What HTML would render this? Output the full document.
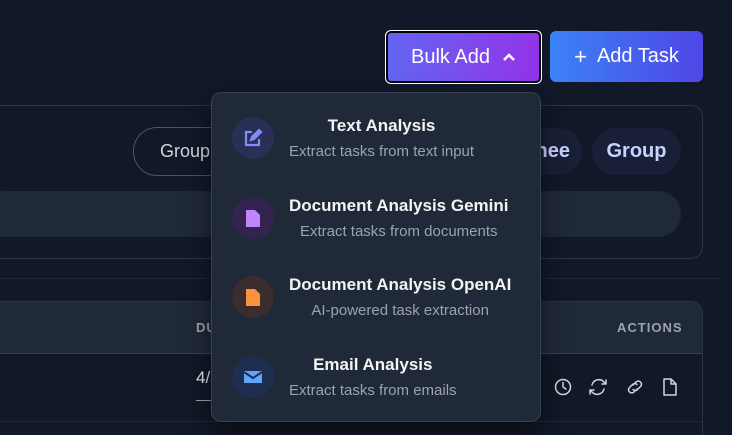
<!DOCTYPE html>
<html><head><style>
*{box-sizing:border-box;margin:0;padding:0}
html,body{width:732px;height:435px;overflow:hidden}
body{background:#111827;font-family:"Liberation Sans",sans-serif;position:relative;color:#e5e7eb}
.abs{position:absolute}
.btn{position:absolute;color:#fff;font-size:20px;display:flex;align-items:center;justify-content:center;border-radius:6px}
.card{position:absolute;border:1px solid #2b3544;border-radius:12px}
.pill{position:absolute;border-radius:24px;font-size:20px;display:flex;align-items:center}
.dd{position:absolute;left:211px;top:92px;width:330px;height:330px;background:#1f2937;border:1px solid #374151;border-radius:10px;box-shadow:0 10px 25px rgba(0,0,0,.5)}
.it{position:absolute;left:20px;height:42px;display:flex;align-items:center}
.ic{width:42px;height:42px;border-radius:50%;display:flex;align-items:center;justify-content:center;margin-right:15px}
.tx{display:flex;flex-direction:column;align-items:center}
.t{font-size:17px;font-weight:bold;color:#f3f4f6;line-height:20px}
.s{font-size:15px;color:#9ca3af;line-height:18px;margin-top:7px}
</style></head><body>
<div class="btn" style="left:385px;top:30px;width:157px;height:54px;border:1px solid #fff;box-shadow:inset 0 0 0 2px #000;background:linear-gradient(90deg,#6366f1,#9333ea)">Bulk Add <svg width="14" height="10" viewBox="0 0 14 10" style="margin-left:12px"><path d="M2 8L7 3L12 8" stroke="#fff" stroke-width="2.5" fill="none"/></svg></div>
<div class="btn" style="left:550px;top:31px;width:153px;height:51px;background:linear-gradient(90deg,#3b82f6,#4f46e5)"><span style="font-size:22px;margin-right:10px">+</span>Add Task</div>

<div class="card" style="left:-12px;top:105px;width:715px;height:154px"></div>
<div class="pill" style="left:133px;top:127px;width:100px;height:49px;border:1px solid #4b5563;color:#d1d5db;padding-left:26px;font-size:18px">Group</div>
<div class="pill" style="left:500px;top:128px;width:82px;height:47px;background:#1a1f38;color:#c7d2fe;justify-content:flex-end;padding-right:12px;font-weight:bold">nee</div>
<div class="pill" style="left:592px;top:128px;width:89px;height:47px;background:#1a1f38;color:#c7d2fe;justify-content:center;font-weight:bold">Group</div>
<div class="abs" style="left:-20px;top:191px;width:701px;height:46px;background:#1f2937;border-radius:23px"></div>
<div class="abs" style="left:0;top:278px;width:722px;height:1px;background:#1f2937"></div>

<div class="card" style="left:-12px;top:301px;width:715px;height:134px;overflow:hidden;border-bottom:none;border-radius:12px 12px 0 0"><div style="height:52px;background:#1f2937;border-bottom:1px solid #374151"></div></div>
<div class="abs" style="left:0;top:421px;width:702px;height:1px;background:#1f2937"></div>
<div class="abs" style="left:196px;top:320px;font-size:13px;font-weight:bold;color:#9ca3af;letter-spacing:1px">DU</div>
<div class="abs" style="left:617px;top:320px;font-size:13px;font-weight:bold;color:#9ca3af;letter-spacing:1px">ACTIONS</div>
<div class="abs" style="left:196px;top:368px;font-size:17px;color:#e5e7eb">4/</div>
<div class="abs" style="left:196px;top:400px;width:20px;height:1px;background:#9ca3af"></div>
<svg class="abs" style="left:553px;top:376px" width="130" height="22" viewBox="0 0 130 22" fill="none" stroke="#d1d5db" stroke-width="1.5" stroke-linecap="round" stroke-linejoin="round">
<circle cx="10" cy="11" r="7.5"/><path d="M10 6.5V11L13 13"/>
<path d="M39 9a7 7 0 0 1 12-3l2 2M53 4v4h-4M51 13a7 7 0 0 1-12 3l-2-2M37 18v-4h4"/>
<path d="M80 9l3-3a3 3 0 0 1 4.5 4.5l-3 3a3 3 0 0 1-4.5 0M84 13l-3 3a3 3 0 0 1-4.5-4.5l3-3a3 3 0 0 1 4.5 0"/>
<path d="M111 3h7l5 5v11h-12zM118 3v5h5"/>
</svg>

<div class="dd">
<div class="it" style="top:24px"><div class="ic" style="background:#2a2f55"><svg width="20" height="20" viewBox="0 0 20 20" fill="none" stroke="#818cf8" stroke-width="2.2"><path d="M9 4H3v13h13v-6"/><path d="M8 12l1-3 7-7 2 2-7 7z" fill="#818cf8"/></svg></div><div class="tx"><div class="t">Text Analysis</div><div class="s">Extract tasks from text input</div></div></div>
<div class="it" style="top:104px"><div class="ic" style="background:#33244f"><svg width="16" height="20" viewBox="0 0 16 20"><path d="M1 2h9l5 5v12H1z" fill="#c084fc"/></svg></div><div class="tx"><div class="t">Document Analysis Gemini</div><div class="s">Extract tasks from documents</div></div></div>
<div class="it" style="top:183px"><div class="ic" style="background:#3b2c2d"><svg width="16" height="20" viewBox="0 0 16 20"><path d="M1 2h9l5 5v12H1z" fill="#fb923c"/></svg></div><div class="tx"><div class="t">Document Analysis OpenAI</div><div class="s">AI-powered task extraction</div></div></div>
<div class="it" style="top:263px"><div class="ic" style="background:#1e2d50"><svg width="20" height="16" viewBox="0 0 20 16"><path d="M1 2h18v12H1z" fill="#60a5fa"/><path d="M1 3l9 6 9-6" stroke="#1e2d50" stroke-width="2" fill="none"/></svg></div><div class="tx"><div class="t">Email Analysis</div><div class="s">Extract tasks from emails</div></div></div>
</div>
</body></html>
